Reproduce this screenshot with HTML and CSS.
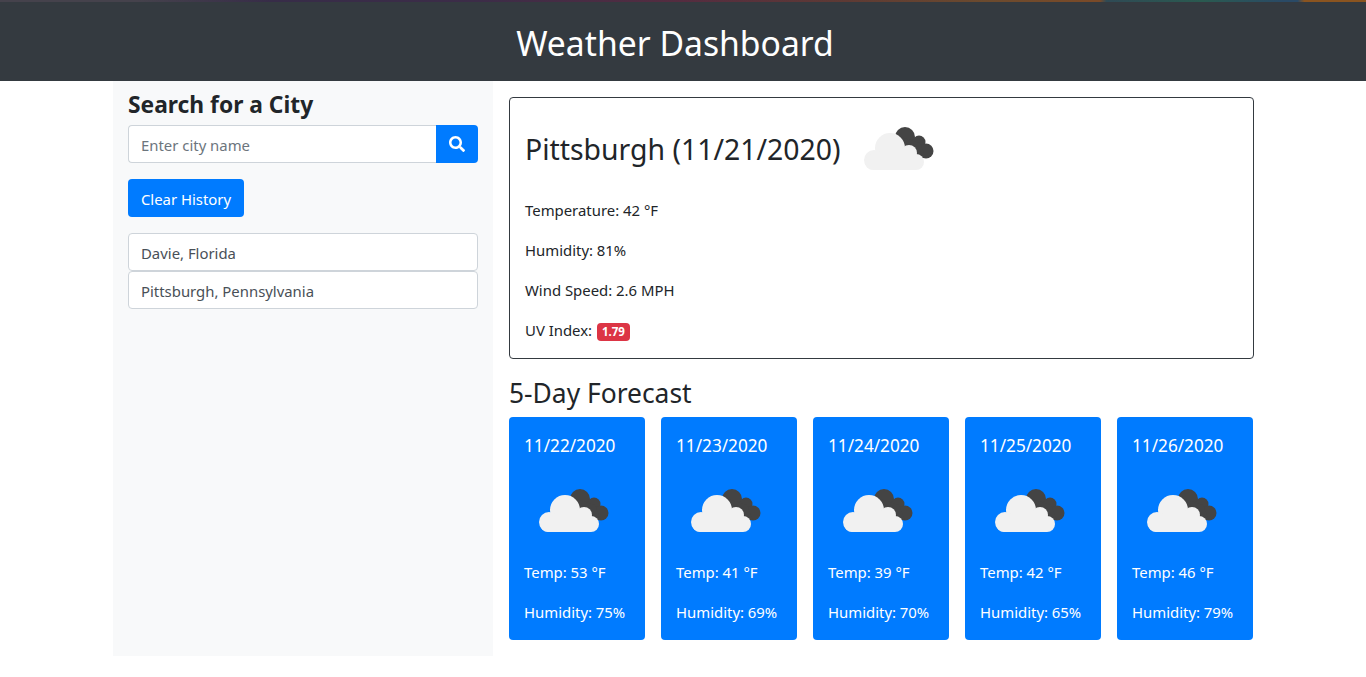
FILE: index.html
```html
<!DOCTYPE html>
<html lang="en">
  <head>
    <meta charset="UTF-8" />
    <meta name="viewport" content="width=device-width, initial-scale=1.0" />
    <title>Weather Dashboard</title>
    <link rel="stylesheet" href="styles.css">
  </head>
  <body>
    <svg class="defs" width="0" height="0">
      <symbol id="clouds" viewBox="0 0 100 100">
        <g fill="#444">
          <circle cx="55" cy="39" r="10" />
          <circle cx="69" cy="44" r="6.5" />
          <circle cx="76" cy="53" r="7.5" />
          <path d="M48 38 L70 45 L76 60 L60 60 Z" />
        </g>
        <g fill="#f1f1f1">
          <circle cx="40" cy="50" r="15" />
          <circle cx="24" cy="62" r="10" />
          <circle cx="59" cy="55" r="8" />
          <rect x="15" y="56" width="59" height="16" rx="8" />
        </g>
      </symbol>
    </svg>

    <div class="top-strip"></div>
    <header class="site-header">
      <h1>Weather Dashboard</h1>
    </header>

    <div class="container">
      <aside class="sidebar">
        <h4>Search for a City</h4>
        <form class="search">
          <input type="text" placeholder="Enter city name" />
          <button type="button" class="search-btn" aria-label="Search">
            <svg viewBox="0 0 512 512" width="16" height="16">
              <path fill="#fff" d="M505 442.7L405.3 343c-4.5-4.5-10.6-7-17-7H372c27.6-35.3 44-79.7 44-128C416 93.1 322.9 0 208 0S0 93.1 0 208s93.1 208 208 208c48.3 0 92.7-16.4 128-44v16.3c0 6.4 2.5 12.5 7 17l99.7 99.7c9.4 9.4 24.6 9.4 33.9 0l28.3-28.3c9.4-9.4 9.4-24.6.1-34zM208 336c-70.7 0-128-57.2-128-128 0-70.7 57.2-128 128-128 70.7 0 128 57.2 128 128 0 70.7-57.2 128-128 128z" />
            </svg>
          </button>
        </form>
        <button type="button" class="clear-btn">Clear History</button>
        <ul class="history">
          <li>Davie, Florida</li>
          <li>Pittsburgh, Pennsylvania</li>
        </ul>
      </aside>

      <main class="content">
        <section class="current">
          <div class="current-title">
            <h2>Pittsburgh (11/21/2020)</h2>
            <svg class="icon"><use href="#clouds" /></svg>
          </div>
          <p>Temperature: 42 °F</p>
          <p>Humidity: 81%</p>
          <p>Wind Speed: 2.6 MPH</p>
          <p>UV Index: <span class="badge">1.79</span></p>
        </section>

        <h3>5-Day Forecast</h3>
        <div class="forecast">
          <div class="day">
            <h5>11/22/2020</h5>
            <svg class="icon"><use href="#clouds" /></svg>
            <p>Temp: 53 °F</p>
            <p>Humidity: 75%</p>
          </div>
          <div class="day">
            <h5>11/23/2020</h5>
            <svg class="icon"><use href="#clouds" /></svg>
            <p>Temp: 41 °F</p>
            <p>Humidity: 69%</p>
          </div>
          <div class="day">
            <h5>11/24/2020</h5>
            <svg class="icon"><use href="#clouds" /></svg>
            <p>Temp: 39 °F</p>
            <p>Humidity: 70%</p>
          </div>
          <div class="day">
            <h5>11/25/2020</h5>
            <svg class="icon"><use href="#clouds" /></svg>
            <p>Temp: 42 °F</p>
            <p>Humidity: 65%</p>
          </div>
          <div class="day">
            <h5>11/26/2020</h5>
            <svg class="icon"><use href="#clouds" /></svg>
            <p>Temp: 46 °F</p>
            <p>Humidity: 79%</p>
          </div>
        </div>
      </main>
    </div>
  </body>
</html>
```

FILE: styles.css
```css
* {
  box-sizing: border-box;
  margin: 0;
  padding: 0;
}

body {
  font-family: "Noto Sans", "Open Sans", sans-serif;
  font-size: 14.9px;
  line-height: 24px;
  color: #212529;
  background: #fff;
}

.defs {
  display: block;
  height: 0;
}

.top-strip {
  height: 2px;
  background: linear-gradient(90deg, #45424c 0, #45424c 10%, #372c48 20%, #3c2c48 35%, #552c40 50%, #5e3a34 62%, #6b4a2e 72%, #7a4a28 80%, #7a4a28 80.5%, #2f4a55 81%, #2a5a50 88%, #2a4a66 94%, #2a4a66 95%, #8a5420 95.5%, #8a5420 100%);
}

.site-header {
  height: 79px;
  padding-right: 16px;
  background: #343a40;
  display: flex;
  justify-content: center;
  align-items: center;

  h1 {
    color: #fff;
    font-size: 33.7px;
    font-weight: 400;
    line-height: 44px;
    margin-top: 2px;
  }
}

.container {
  width: 1140px;
  margin: 0 auto;
  display: flex;
}

.sidebar {
  width: 380px;
  height: 575px;
  padding: 12px 15px 0;
  background: #f8f9fa;

  h4 {
    font-size: 22.8px;
    font-weight: 700;
    line-height: 24px;
    margin-bottom: 8px;
  }
}

.search {
  display: flex;
  height: 38px;
  margin-bottom: 16px;

  input {
    flex: 1;
    min-width: 0;
    padding: 7px 12px 5px;
    font: inherit;
    color: #495057;
    border: 1px solid #ced4da;
    border-right: 0;
    border-radius: 4px 0 0 4px;
    background: #fff;

    &::placeholder {
      color: #6c757d;
      opacity: 1;
    }
  }
}

.search-btn {
  width: 42px;
  border: 0;
  border-radius: 0 4px 4px 0;
  background: #007bff;
  display: flex;
  align-items: center;
  justify-content: center;
}

.clear-btn {
  display: block;
  width: 116px;
  height: 38px;
  padding: 2px 0 0;
  font: inherit;
  color: #fff;
  background: #007bff;
  border: 0;
  border-radius: 4px;
  margin-bottom: 16px;
}

.history {
  list-style: none;

  li {
    height: 38px;
    padding: 7px 12px 0;
    color: #495057;
    background: #fff;
    border: 1px solid #ced4da;
    border-radius: 4px;
  }
}

.content {
  width: 760px;
  padding: 16px 0 16px 16px;

  h3 {
    font-size: 26.4px;
    font-weight: 400;
    line-height: 34px;
    margin: 17px 0 7px;
  }
}

.current {
  width: 745px;
  padding: 0 15px;
  border: 1px solid #343a40;
  border-radius: 4px;

  p {
    margin-bottom: 16px;
  }
}

.current-title {
  height: 100px;
  display: flex;
  align-items: flex-start;

  h2 {
    font-size: 28.4px;
    font-weight: 400;
    line-height: 38px;
    margin: 32px 9px 0 0;
  }
}

.icon {
  display: block;
  width: 100px;
  height: 100px;
  flex: none;
}

.badge {
  display: inline-block;
  margin-left: 1px;
  padding: 3px 5px;
  font-size: 11.5px;
  font-weight: 700;
  line-height: 12px;
  color: #fff;
  background: #dc3545;
  border-radius: 4px;
  vertical-align: baseline;
}

.forecast {
  display: flex;
  gap: 16px;
}

.day {
  width: 136px;
  height: 223px;
  padding: 15px;
  color: #fff;
  background: #007bff;
  border-radius: 4px;

  h5 {
    font-size: 17.2px;
    font-weight: 400;
    line-height: 28px;
  }

  .icon {
    margin-left: 1px;
  }

  p {
    margin-bottom: 16px;
  }
}
```
